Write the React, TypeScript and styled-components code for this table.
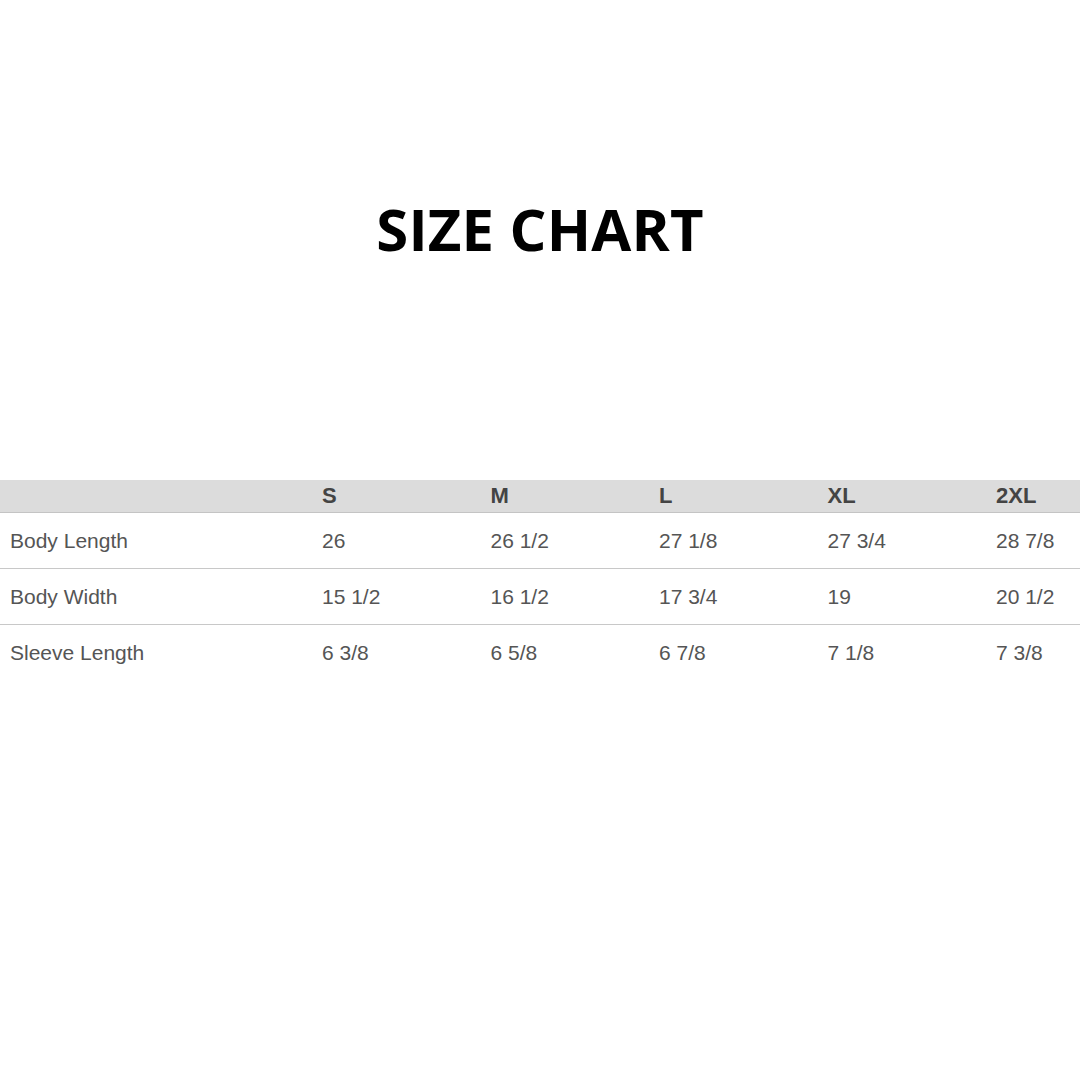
import React from "react";
import styled, { createGlobalStyle } from "styled-components";

const Global = createGlobalStyle`
  html, body { margin: 0; padding: 0; background: #fff; }
  #root { width: 1080px; height: 1080px; overflow: hidden; }
`;

const Page = styled.div`
  width: 1080px;
  height: 1080px;
  display: flex;
  flex-direction: column;
  background: #fff;
  overflow: hidden;
`;

const Title = styled.h1`
  margin: 194px 0 0;
  text-align: center;
  font-family: "Open Sans", sans-serif;
  font-weight: 700;
  font-size: 58px;
  line-height: 70px;
  color: #000;
  letter-spacing: 0.2px;
`;

const Table = styled.div`
  margin-top: 216px;
  display: grid;
  grid-template-columns: 312px repeat(5, 168.5px);
  width: 1155px;
  font-family: "Liberation Sans", Arial, sans-serif;
`;

const HeadCell = styled.div`
  background: #dcdcdc;
  height: 32px;
  border-bottom: 1px solid #c4c4c4;
  display: flex;
  align-items: center;
  padding-left: 10px;
  font-size: 22px;
  font-weight: 700;
  color: #444;
`;

const Cell = styled.div<{ $last?: boolean }>`
  height: 55px;
  border-bottom: ${(p) => (p.$last ? "none" : "1px solid #c8c8c8")};
  display: flex;
  align-items: center;
  padding-left: 10px;
  font-size: 21px;
  color: #555;
`;

const sizes = ["S", "M", "L", "XL", "2XL"];
const rows: [string, string[]][] = [
  ["Body Length", ["26", "26 1/2", "27 1/8", "27 3/4", "28 7/8"]],
  ["Body Width", ["15 1/2", "16 1/2", "17 3/4", "19", "20 1/2"]],
  ["Sleeve Length", ["6 3/8", "6 5/8", "6 7/8", "7 1/8", "7 3/8"]],
];

export default function App() {
  return (
    <Page>
      <Global />
      <Title>SIZE CHART</Title>
      <Table>
        <HeadCell />
        {sizes.map((s) => (
          <HeadCell key={s}>{s}</HeadCell>
        ))}
        {rows.map(([label, vals], i) => (
          <React.Fragment key={label}>
            <Cell $last={i === rows.length - 1}>{label}</Cell>
            {vals.map((v, j) => (
              <Cell key={j} $last={i === rows.length - 1}>
                {v}
              </Cell>
            ))}
          </React.Fragment>
        ))}
      </Table>
    </Page>
  );
}
